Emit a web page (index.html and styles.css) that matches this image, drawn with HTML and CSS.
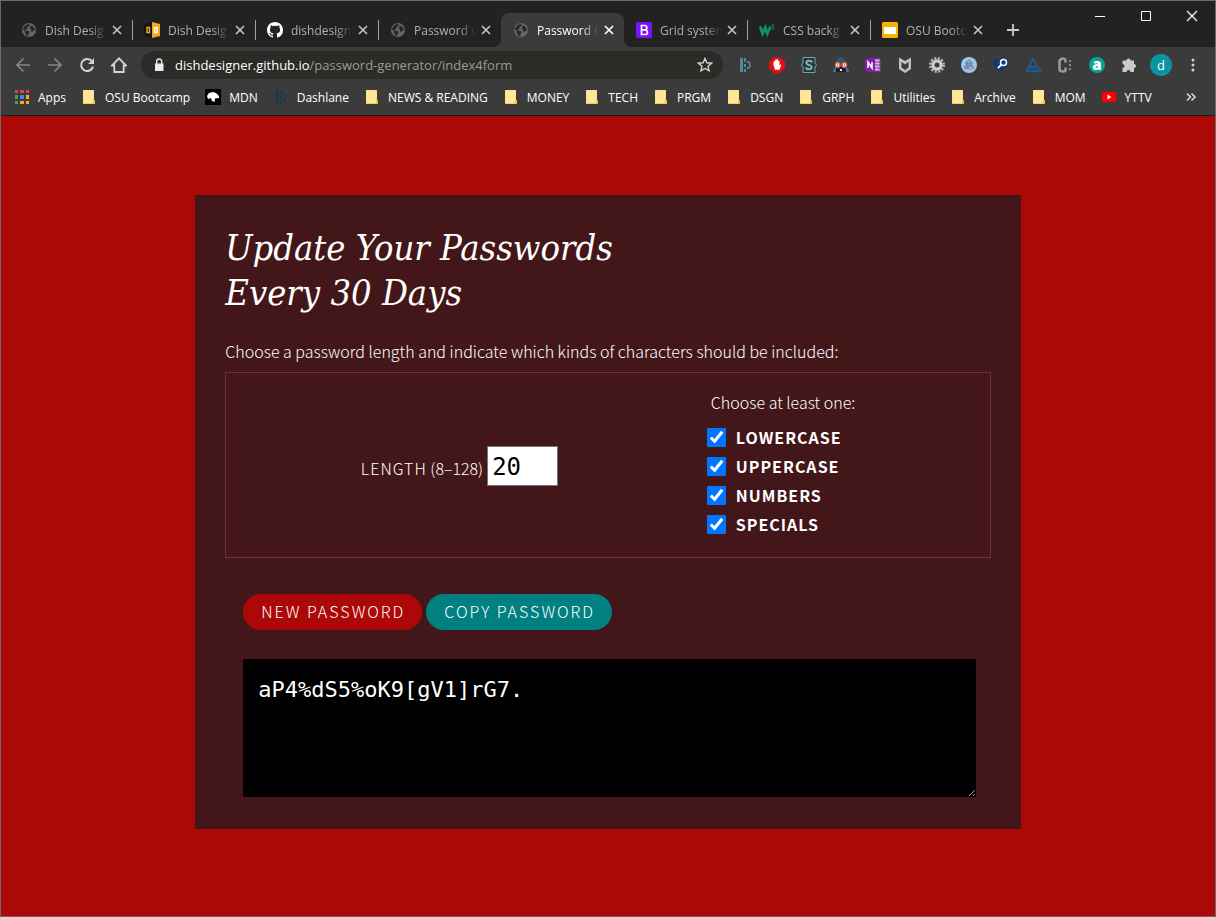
FILE: index.html
```html
<!DOCTYPE html>
<html lang="en">
<head>
<meta charset="utf-8">
<title>Password Generator</title>
<link rel="stylesheet" href="styles.css">
</head>
<body>
<svg class="defs" aria-hidden="true">
  <symbol id="globe" viewBox="0 0 16 16"><circle cx="8" cy="8" r="7" fill="#62666a"/><path d="M3.2 4.6 6 2.3l3 .2-.6 1.8-2.2.8.4 1.7-1.8.4.2 1.5 2.6.4 1.1 1.3-1.3 1.3.1 2-1.6.2-1.7-2.3-.4-2.5-2-2zM10.6 3.5l2.6 2.2.7 2.8-1.7.2-.9 1.4-1.5-1.2.3-1.6-1.2-.5.2-2.1z" fill="#26282a"/></symbol>
  <symbol id="close" viewBox="0 0 16 16"><path d="m4 4 8 8m0-8-8 8" stroke="currentColor" stroke-width="1.7"/></symbol>
  <symbol id="folder" viewBox="0 0 16 16"><path d="M2 1h11v10l1 1v3H2z" fill="#ffe082"/><path d="M3 2h9v12H3z" fill="#ffe69a"/><path d="M12 11h2v4h-2z" fill="#e8c33c"/><path d="M2 14h10v1H2z" fill="#f5cf52"/></symbol>
  <symbol id="dash" viewBox="0 0 16 16"><path d="M3 1h3v14H3zM7 1h2v4H7zM7 7h2v3H7zM7 12h2v3H7zM10 4h2v2h-2zM12 5h1.500v6H12zM10 10h2v2h-2z" fill="currentColor"/></symbol>
</svg>
<div class="window">
  <header class="browser">
    <div class="strip">
      <div class="tab plain"><svg class="ico"><use href="#globe"/></svg><span class="tab-title">Dish Desig</span><button class="tab-close" aria-label="Close tab"><svg class="ico"><use href="#close"/></svg></button></div>
      <div class="tab"><svg class="ico" viewBox="0 0 16 16"><path d="M0 2 8 0v16l-8-2z" fill="#151515"/><path d="m8 0 8 2v12l-8 2z" fill="#f5a91d"/><path d="M3 5.5h2.500v5H3z" fill="none" stroke="#f5a91d" stroke-width="1.4"/><path d="M10.500 5.500H13v5h-2.500z" fill="none" stroke="#fff" stroke-width="1.5"/></svg><span class="tab-title">Dish Desig</span><button class="tab-close" aria-label="Close tab"><svg class="ico"><use href="#close"/></svg></button></div>
      <div class="tab"><svg class="ico" viewBox="0 0 16 16"><path fill="#fff" d="M8 0C3.58 0 0 3.58 0 8c0 3.54 2.29 6.53 5.47 7.59.4.07.55-.17.55-.38 0-.19-.01-.82-.01-1.49-2.01.37-2.53-.49-2.69-.94-.09-.23-.48-.94-.82-1.13-.28-.15-.68-.52-.01-.53.63-.01 1.08.58 1.23.82.72 1.21 1.87.87 2.33.66.07-.52.28-.87.51-1.07-1.78-.2-3.64-.89-3.64-3.95 0-.87.31-1.59.82-2.15-.08-.2-.36-1.02.08-2.12 0 0 .67-.21 2.2.82.64-.18 1.32-.27 2-.27s1.36.09 2 .27c1.53-1.04 2.2-.82 2.2-.82.44 1.1.16 1.92.08 2.12.51.56.82 1.27.82 2.15 0 3.07-1.87 3.75-3.65 3.95.29.25.54.73.54 1.48 0 1.07-.01 1.93-.01 2.2 0 .21.15.46.55.38A8.01 8.01 0 0 0 16 8c0-4.42-3.58-8-8-8z"/></svg><span class="tab-title">dishdesign</span><button class="tab-close" aria-label="Close tab"><svg class="ico"><use href="#close"/></svg></button></div>
      <div class="tab"><svg class="ico"><use href="#globe"/></svg><span class="tab-title">Password G</span><button class="tab-close" aria-label="Close tab"><svg class="ico"><use href="#close"/></svg></button></div>
      <div class="tab active"><svg class="ico"><use href="#globe"/></svg><span class="tab-title">Password G</span><button class="tab-close" aria-label="Close tab"><svg class="ico"><use href="#close"/></svg></button></div>
      <div class="tab plain"><svg class="ico" viewBox="0 0 16 16"><rect width="16" height="16" rx="1.5" fill="#7a12f5"/><path d="M5.500 3.500h3.200a2.100 2.100 0 0 1 0 4.300H5.500zM5.500 7.800h3.600a2.300 2.300 0 0 1 0 4.700H5.500z" fill="none" stroke="#fff" stroke-width="1.7"/></svg><span class="tab-title">Grid system</span><button class="tab-close" aria-label="Close tab"><svg class="ico"><use href="#close"/></svg></button></div>
      <div class="tab"><svg class="ico" viewBox="0 0 16 16"><path d="m1 4.500 2.600 7 2.700-6 2 6 3.200-7" fill="none" stroke="#059862" stroke-width="2.8"/><path d="M12.500 3h2.300l-1.300 2q1.700.2 1.300 1.700-.7 1.200-2.200.5" fill="none" stroke="#059862"/></svg><span class="tab-title">CSS backg</span><button class="tab-close" aria-label="Close tab"><svg class="ico"><use href="#close"/></svg></button></div>
      <div class="tab"><svg class="ico" viewBox="0 0 16 16"><rect width="16" height="16" rx="1.5" fill="#f4b400"/><path d="M2 5h12v7H2z" fill="#fff"/></svg><span class="tab-title">OSU Bootc</span><button class="tab-close" aria-label="Close tab"><svg class="ico"><use href="#close"/></svg></button></div>
      <button class="new-tab" aria-label="New tab"><svg class="ico" viewBox="0 0 16 16"><path d="M8 2v12M2 8h12" stroke="currentColor" stroke-width="1.8"/></svg></button>
      <div class="controls">
        <button aria-label="Minimize"><svg class="ico" viewBox="0 0 16 16"><path d="M3 8.500h10" stroke="#fff"/></svg></button>
        <button aria-label="Maximize"><svg class="ico" viewBox="0 0 16 16"><path d="M3.500 3.500h9v9h-9z" stroke="#fff" fill="none"/></svg></button>
        <button aria-label="Close window"><svg class="ico" viewBox="0 0 16 16"><path d="m3 3 10 10m0-10L3 13" stroke="#fff" stroke-width="1.2"/></svg></button>
      </div>
    </div>

    <div class="toolbar">
      <button class="tool dim" aria-label="Back"><svg class="ico" viewBox="0 0 16 16"><path d="M15 8H2m6.500-6.500L2 8l6.500 6.500" fill="none" stroke="currentColor" stroke-width="1.7"/></svg></button>
      <button class="tool dim" aria-label="Forward"><svg class="ico" viewBox="0 0 16 16"><path d="M1 8h13M7.500 1.500 14 8l-6.500 6.500" fill="none" stroke="currentColor" stroke-width="1.7"/></svg></button>
      <button class="tool" aria-label="Reload"><svg class="ico" viewBox="0 0 16 16"><path d="M13 4.500A6 6 0 1 0 14 9.500" fill="none" stroke="currentColor" stroke-width="2"/><path d="M15 1v6H9z" fill="currentColor"/></svg></button>
      <button class="tool" aria-label="Home"><svg class="ico" viewBox="0 0 16 16"><path d="M1 8.500 8 1.300l7 7.200h-2.300V15H3.300V8.500z" fill="none" stroke="currentColor" stroke-width="1.8"/></svg></button>
      <div class="omnibox">
        <svg class="ico" viewBox="0 0 16 16"><path d="M4 6.500h8.500V14H4z" fill="#e8eaed"/><path d="M5.700 7V4.500a2.500 2.500 0 0 1 5 0V7" fill="none" stroke="#e8eaed" stroke-width="1.400"/></svg>
        <span class="url"><b>dishdesigner.github.io</b>/password-generator/index4form</span>
        <button class="star" aria-label="Bookmark this page"><svg class="ico" viewBox="0 0 16 16"><path d="m8 1.500 1.900 4.300 4.700.4-3.600 3.100 1.100 4.600L8 11.500l-4.100 2.400L5 9.300 1.400 6.200l4.700-.4z" fill="none" stroke="#d0d2d4" stroke-width="1.400"/></svg></button>
      </div>
      <button class="tool teal" aria-label="Dashlane"><svg class="ico"><use href="#dash"/></svg></button>
      <button class="tool" aria-label="AdBlock"><svg class="ico" viewBox="0 0 16 16"><path d="M5 0h6l5 5v6l-5 5H5l-5-5V5z" fill="#e60c12"/><path d="M4.500 8V4.500q.8-.8 1.500 0V3q.8-.9 1.500 0v-.5q.8-.8 1.500 0V4q.8-.8 1.500 0v4.500l.8-1q1-.2.900.7L10.500 12.800H6z" fill="#fff"/></svg></button>
      <button class="tool" aria-label="Stylus"><svg class="ico" viewBox="0 0 16 16"><path d="M2 .5h12v5.500l1.500 2-1.500 2v5.500H2V10L.5 8 2 6z" fill="#203b3c" stroke="#77a39d"/><path d="M10.800 5.500V5Q10.500 3.700 8 3.700T5.300 5.800Q5.500 7.300 8 8t2.700 2.200Q10.500 12.300 8 12.300T5.200 10.800v-.5" fill="none" stroke="#84b5ad" stroke-width="2"/></svg></button>
      <button class="tool" aria-label="Reader"><svg class="ico" viewBox="0 0 16 16"><path d="M8 0q5 1 6 7H2Q3 1 8 0z" fill="#2b5a70"/><path d="M0 15q0-4 3-5h10q3 1 3 5z" fill="#3d7391"/><path d="M3 10h10v5H3z" fill="#182329"/><circle cx="4.700" cy="8" r="2.400" fill="#fff" stroke="#d9533d" stroke-width="1.400"/><circle cx="11.300" cy="8" r="2.400" fill="#fff" stroke="#d9533d" stroke-width="1.400"/><path d="M4.200 7.500h1v1h-1zM10.800 7.500h1v1h-1z" fill="#182329"/><path d="M7 12h2v2H7z" fill="#d8e0e4"/></svg></button>
      <button class="tool" aria-label="OneNote"><svg class="ico" viewBox="0 0 16 16"><path d="M8 2h7v12H8z" fill="#d9b5e8" stroke="#9c36bd"/><path d="M10 5h6M10 8h6M10 11h6" stroke="#8527a5"/><path d="m0 2 10-2v16L0 14z" fill="#7e22a0"/><path d="M3 11V5l4 6V5" fill="none" stroke="#fff" stroke-width="1.500"/></svg></button>
      <button class="tool" aria-label="McAfee"><svg class="ico" viewBox="0 0 16 16"><path d="M2 .5 8 4l6-3.500V12l-6 4-6-4zM4.500 4.800v5.800L8 13l3.500-2.400V4.800L8 7.500z" fill="#c0c0c0" fill-rule="evenodd"/></svg></button>
      <button class="tool" aria-label="Settings extension"><svg class="ico" viewBox="0 0 16 16"><circle cx="8" cy="8" r="6.500" fill="none" stroke="#b5b5b5" stroke-width="3" stroke-dasharray="2 1.400"/><circle cx="8" cy="8" r="4" fill="none" stroke="#cfcfcf" stroke-width="3"/></svg></button>
      <button class="tool" aria-label="Helper"><svg class="ico" viewBox="0 0 16 16"><circle cx="8" cy="8" r="8" fill="#9cc7f2"/><path d="M8 2.500 12 6H4zM5 6h6v3H5zM3.500 9H8v3H3.500zM9 9h3.500v3H9z" fill="#7892b8" stroke="#6484ae" stroke-width=".5"/><path d="M7 4h2v2H7zM8 10h4v3H8z" fill="#c09b9e"/></svg></button>
      <button class="tool" aria-label="Inspector"><svg class="ico" viewBox="0 0 16 16"><path d="M8 15 1 8.500Q-1.500 3 3 2q3-.5 5 2 3-3 6-1.500 4 2.500 0 7z" fill="#0c3c74"/><circle cx="10.500" cy="5.500" r="3" fill="#0c3c74" stroke="#fff" stroke-width="1.500"/><path d="M8.400 7.600 5 11" stroke="#fff" stroke-width="1.800"/></svg></button>
      <button class="tool" aria-label="Geometry"><svg class="ico" viewBox="0 0 16 16"><path d="M8 1.500 15 14M1 14 8 1.500M1 14h14" fill="none" stroke="#1768ad" stroke-width="1.300"/><path d="M5.500 11.500V9H7v2.500M8.500 9v2.500M11 8.500 9 10l2 1.500" fill="none" stroke="#1768ad"/><circle cx="14.500" cy="14" r="1.300" fill="#3b3b3b" stroke="#1768ad"/></svg></button>
      <button class="tool" aria-label="Console"><svg class="ico" viewBox="0 0 16 16"><path d="M8.500 5.500V4Q8.500 1.500 6 1.500T2.500 4v8q0 2.500 3.500 2.500T8.500 12v-1.500" fill="none" stroke="#999" stroke-width="2.600"/><path d="M12 3h2v2h-2zM12 7h2v2h-2zM12 11h2v2h-2z" fill="#8a8a8a"/></svg></button>
      <button class="tool" aria-label="Amazon"><span class="badge-a">a</span></button>
      <button class="tool" aria-label="Extensions"><svg class="ico" viewBox="0 0 16 16"><path d="M2 3.500h3.500a2 2 0 1 1 4 0H13V7a2 2 0 1 1 0 4v4H9.500a2 2 0 0 0-4 0H1.500v-4a2 2 0 0 0 0-4V4z" fill="#c8cacc"/></svg></button>
      <button class="tool" aria-label="Profile"><span class="avatar">d</span></button>
      <button class="tool" aria-label="Menu"><svg class="ico" viewBox="0 0 16 16"><path d="M8 3h0M8 8h0M8 13h0" stroke="currentColor" stroke-width="3" stroke-linecap="round"/></svg></button>
    </div>

    <nav class="bookmarks">
      <a href="#"><svg class="ico" viewBox="0 0 16 16"><path d="M1 1h3v3H1zM6 1h4v3H6zM12 1h3v3h-3z" fill="#ea4335"/><path d="M1 6h3v4H1zM1 12h3v3H1z" fill="#34a853"/><path d="M6 6h4v4H6z" fill="#4285f4"/><path d="M12 6h3v4h-3zM6 12h4v3H6zM12 12h3v3h-3z" fill="#fbab16"/></svg>Apps</a>
      <a href="#"><svg class="ico"><use href="#folder"/></svg>OSU Bootcamp</a>
      <a href="#"><svg class="ico" viewBox="0 0 16 16"><path d="M0 0h16v16H0z" fill="#000"/><path d="M2 7 4 4l4-1 3 1 3 3v2l-4 .5L9.500 13 7 12l-1-3-3 1z" fill="#fff"/></svg>MDN</a>
      <a href="#"><svg class="ico navy"><use href="#dash"/></svg>Dashlane</a>
      <a href="#"><svg class="ico"><use href="#folder"/></svg>NEWS &amp; READING</a>
      <a href="#"><svg class="ico"><use href="#folder"/></svg>MONEY</a>
      <a href="#"><svg class="ico"><use href="#folder"/></svg>TECH</a>
      <a href="#"><svg class="ico"><use href="#folder"/></svg>PRGM</a>
      <a href="#"><svg class="ico"><use href="#folder"/></svg>DSGN</a>
      <a href="#"><svg class="ico"><use href="#folder"/></svg>GRPH</a>
      <a href="#"><svg class="ico"><use href="#folder"/></svg>Utilities</a>
      <a href="#"><svg class="ico"><use href="#folder"/></svg>Archive</a>
      <a href="#"><svg class="ico"><use href="#folder"/></svg>MOM</a>
      <a href="#"><svg class="ico" viewBox="0 0 16 16"><rect x="1" y="3" width="14" height="10" rx="2" fill="#f00"/><path d="m6.500 5.500 4 2.500-4 2.500z" fill="#fff"/></svg>YTTV</a>
      <button class="more" aria-label="More bookmarks"><svg class="ico" viewBox="0 0 16 16"><path d="m4 4.500 3.500 3.500L4 11.500m4.500-7L12 8l-3.500 3.500" fill="none" stroke="currentColor" stroke-width="1.500"/></svg></button>
    </nav>
  </header>

  <main class="page">
    <section class="panel">
      <h1>Update Your Passwords<br>Every 30 Days</h1>
      <form>
        <p class="intro">Choose a password length and indicate which kinds of characters should be included:</p>
        <div class="options">
          <div class="length">
            <label for="length"><span class="caps">LENGTH</span> (8–128)</label>
            <input id="length" type="text" inputmode="numeric" value="20">
          </div>
          <div class="kinds">
            <p>Choose at least one:</p>
            <label><input type="checkbox" checked>LOWERCASE</label>
            <label><input type="checkbox" checked>UPPERCASE</label>
            <label><input type="checkbox" checked>NUMBERS</label>
            <label><input type="checkbox" checked>SPECIALS</label>
          </div>
        </div>
        <div class="result">
          <div class="actions">
            <button type="button" class="pill red">NEW PASSWORD</button>
            <button type="button" class="pill green">COPY PASSWORD</button>
          </div>
          <textarea aria-label="Generated password" spellcheck="false">aP4%dS5%oK9[gV1]rG7.</textarea>
        </div>
      </form>
    </section>
  </main>
</div>
</body>
</html>
```

FILE: styles.css
```css
* { box-sizing: border-box; }

body {
  margin: 0;
  color: #fff;
  font-family: "Open Sans", "Noto Sans", sans-serif;
  font-size: 12px;
}

button {
  padding: 0;
  border: 0;
  background: none;
  color: inherit;
  font: inherit;
}

.defs { display: none; }

.ico {
  display: block;
  flex: none;
  width: 16px;
  height: 16px;
}

.window {
  display: flex;
  flex-direction: column;
  min-height: 100vh;
  border: 1px solid #6a6a6a;
}

/* Browser chrome */
.browser {
  background: #3b3b3b;
  border-bottom: 1px solid #1b1616;
}

.strip {
  display: flex;
  align-items: flex-end;
  height: 46px;
  padding-left: 8px;
  background: #222;
}

.tab {
  position: relative;
  display: flex;
  flex: 0 1 123px;
  align-items: center;
  gap: 8px;
  min-width: 0;
  height: 34px;
  padding: 0 7px 0 12px;
  color: #b0b0b0;
  background: linear-gradient(#a0a0a0, #a0a0a0) left 7px / 1px 20px no-repeat;
}

.tab.plain { background: none; }
.tab.active {
  background: #3b3b3b;
  border-radius: 8px 8px 0 0;
  color: #fff;
}

/* Curved feet of the active tab */
.active::before, .active::after {
  content: "";
  position: absolute;
  bottom: 0;
  width: 8px;
  height: 8px;
}
.active::before {
  right: 100%;
  background: radial-gradient(circle at 0 0, transparent 8px, #3b3b3b 8px);
}
.active::after {
  left: 100%;
  background: radial-gradient(circle at 100% 0, transparent 8px, #3b3b3b 8px);
}

.tab-title {
  flex: 1 0 auto;
  width: 64px;
  margin-right: -4px;
  white-space: nowrap;
  mask-image: linear-gradient(to right, #000 70%, transparent 96%);
}

.tab-close { margin-left: -4px; color: #c4c4c4; }
.active .tab-close { color: #fff; }

.new-tab { margin: 0 0 9px 12px; color: #ccc; }

.controls {
  display: flex;
  align-self: flex-start;
  margin-left: auto;
}
.controls button {
  display: grid;
  place-items: center;
  width: 46px;
  height: 29px;
}

.toolbar {
  display: flex;
  align-items: center;
  height: 36px;
  padding: 0 6px;
}

.tool {
  display: grid;
  flex: none;
  place-items: center;
  width: 32px;
  height: 28px;
  color: #d2d4d6;
}
.tool.dim { color: #858585; }
.tool.teal { color: #54879d; }
.navy { color: #173c4b; }

.omnibox {
  display: flex;
  flex: 1;
  align-items: center;
  gap: 8px;
  min-width: 0;
  height: 28px;
  margin: 0 6px;
  padding: 0 10px;
  border-radius: 14px;
  background: #2b2b28;
  font-size: 13px;
}
.url { flex: 1; color: #9b9b99; white-space: nowrap; overflow: hidden; }
.url b { color: #fff; font-weight: 400; }

.badge-a, .avatar {
  display: grid;
  place-items: center;
  border-radius: 50%;
}
.badge-a {
  width: 16px;
  height: 16px;
  background: #0aa591;
  color: #fff;
  font-size: 15px;
  font-weight: 800;
  line-height: 12px;
  padding-bottom: 2px;
}
.avatar {
  width: 22px;
  height: 22px;
  background: #0a95a5;
  color: #fff;
  font-size: 13px;
}

.bookmarks {
  display: flex;
  align-items: center;
  gap: 15px;
  height: 32px;
  padding: 0 16px 4px 13px;
}
.bookmarks a {
  display: flex;
  align-items: center;
  gap: 8px;
  color: #fff;
  text-decoration: none;
  white-space: nowrap;
}
.more { margin-left: auto; color: #ddd; }

/* Password generator */
.page {
  flex: 1;
  padding: 79px 0;
  background: #ad0808;
  font-family: "Noto Sans CJK JP", "Noto Sans", sans-serif;
  font-size: 16px;
  font-weight: 300;
}

.panel {
  width: 68%;
  margin: 0 auto;
  padding: 30px 30px 32px;
  background: #431719;
}

h1 {
  margin: 0 0 21px;
  font-family: "DejaVu Serif Condensed", "DejaVu Serif", serif;
  font-size: 36px;
  font-style: italic;
  font-weight: 400;
  line-height: 45px;
}

.intro {
  margin: 0 0 6px;
  line-height: 30px;
}

.options {
  display: grid;
  grid-template-columns: 11fr 7fr;
  padding: 15px 0 18px;
  border: 1px solid #6d3438;
}

.length {
  display: flex;
  align-items: center;
  justify-content: center;
  gap: 4px;
  padding-top: 4px;
}
.length label { padding-top: 4px; }
.caps { letter-spacing: 1px; }
.length input {
  width: 71px;
  height: 40px;
  padding: 2px 4px 0;
  border: 1px solid #767676;
  background: #fff;
  color: #000;
  font-family: "DejaVu Sans Mono", monospace;
  font-size: 24px;
}

.kinds { padding-left: 14px; }
.kinds p { margin: 0 0 7px 4px; line-height: 28px; }
.kinds label {
  display: flex;
  align-items: center;
  gap: 10px;
  font-weight: 700;
  letter-spacing: 1px;
  line-height: 29px;
}
.kinds input {
  width: 19px;
  height: 19px;
  margin: 0;
  accent-color: #0075ff;
}

.result { padding: 36px 15px 0 18px; }
.actions { display: flex; gap: 4px; }
.pill {
  height: 36px;
  padding: 0 17px 2px 18px;
  border-radius: 18px;
  color: #fff;
  letter-spacing: 2px;
}
.red { background: #ad0808; }
.green { background: #008080; }

textarea {
  display: block;
  width: 100%;
  height: 138px;
  margin-top: 29px;
  padding: 17px 15px;
  border: 0;
  background: #000;
  color: #fff;
  font-family: "DejaVu Sans Mono", monospace;
  font-size: 22px;
  line-height: 28px;
  resize: both;
}
```
